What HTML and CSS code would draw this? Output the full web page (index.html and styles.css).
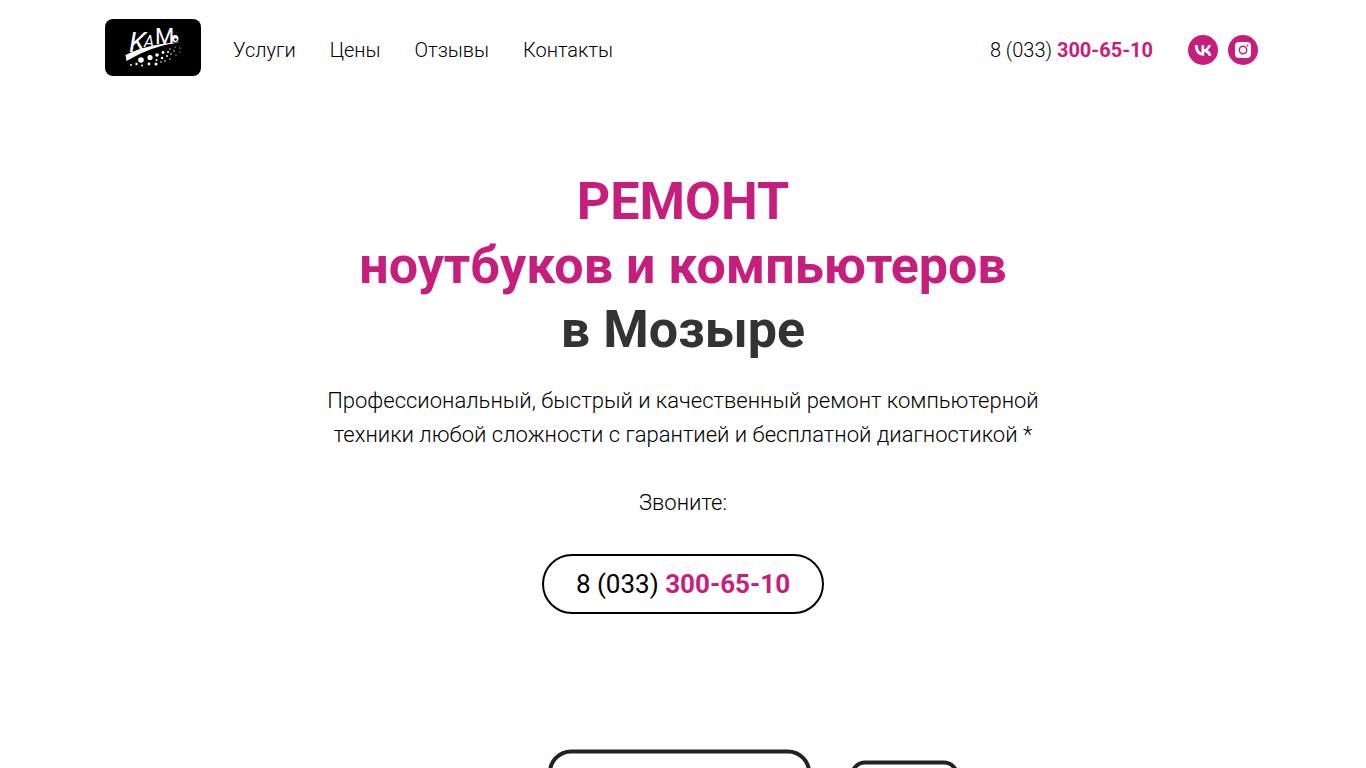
FILE: index.html
```
<!DOCTYPE html>
<html lang="ru">

<head>
    <meta charset="utf-8">
    <meta name="viewport" content="width=device-width, initial-scale=1">
    <title>Ремонт ноутбуков и компьютеров в Мозыре</title>
    <link rel="stylesheet" href="styles.css">
</head>

<body>
    <header class="header">
        <a href="#" class="logo" aria-label="КаМо">
            <svg width="96" height="57" viewBox="0 0 96 57">
                <rect width="96" height="57" rx="8"/>
                <g class="logo-text">
                    <text x="24" y="33" font-size="28" font-style="italic">K</text>
                    <text x="39" y="28" font-size="16" font-style="italic">A</text>
                    <text x="50" y="25" font-size="22">M</text>
                </g>
                <g fill="#fff">
                    <path d="M20.500 36Q42 25 76 23Q46 27 21.500 42Z"/>
                    <circle cx="70" cy="19.500" r="3.500"/>
                    <circle cx="36" cy="41" r="2.800"/>
                    <circle cx="45" cy="38.500" r="2.600"/>
                    <circle cx="52" cy="36" r="1.800"/>
                    <circle cx="58" cy="33.500" r="1.400"/>
                    <circle cx="63" cy="33" r="1"/>
                    <circle cx="26" cy="46" r="1"/>
                    <circle cx="31.500" cy="45" r="1.200"/>
                    <circle cx="37" cy="46.500" r="1"/>
                    <circle cx="44" cy="45" r="1.400"/>
                    <circle cx="51" cy="45" r="1.500"/>
                    <circle cx="51.500" cy="41" r="1"/>
                    <circle cx="57" cy="39" r="1.200"/>
                    <circle cx="56" cy="43" r=".8"/>
                    <circle cx="60" cy="42" r=".8"/>
                    <circle cx="62" cy="37" r=".9"/>
                    <circle cx="65" cy="40" r=".7"/>
                    <circle cx="66" cy="35" r=".8"/>
                    <circle cx="65" cy="30" r=".7"/>
                    <circle cx="69" cy="32" r=".7"/>
                    <circle cx="70" cy="28" r=".6"/>
                    <circle cx="71" cy="36" r=".6"/>
                    <circle cx="75" cy="29" r=".6"/>
                    <circle cx="75" cy="33" r=".5"/>
                </g>
                <circle cx="70.500" cy="20.500" r="1.300"/>
            </svg>
        </a>
        <nav class="nav">
            <a href="#services">Услуги</a>
            <a href="#prices">Цены</a>
            <a href="#reviews">Отзывы</a>
            <a href="#contacts">Контакты</a>
        </nav>
        <a href="tel:80333006510" class="phone">8 (033) <strong>300-65-10</strong></a>
        <div class="socials">
            <a href="#" aria-label="VK">
                <svg width="30" height="30" viewBox="0 0 30 30">
                    <circle cx="15" cy="15" r="15" fill="#c71e7e"/>
                    <path fill="#fff" d="M15.900 20.700C10.200 20.700 7 16.700 6.800 10.200H9.700C9.800 15 11.900 17 13.500 17.400V10.200H16.200V14.300C17.800 14.100 19.500 12.300 20.100 10.200H22.800C22.400 12.600 20.700 14.400 19.500 15.100C20.700 15.700 22.600 17.200 23.400 20.700H20.500C19.900 18.700 18.300 17.200 16.200 17V20.700Z"/>
                </svg>
            </a>
            <a href="#" aria-label="Instagram">
                <svg width="30" height="30" viewBox="0 0 30 30">
                    <circle cx="15" cy="15" r="15" fill="#c71e7e"/>
                    <rect x="7" y="7" width="16" height="16" rx="4" fill="#fff"/>
                    <circle cx="15" cy="15" r="3.700" fill="none" stroke="#c71e7e" stroke-width="1.500"/>
                    <circle cx="19.500" cy="10.500" r="1" fill="#c71e7e"/>
                </svg>
            </a>
        </div>
    </header>

    <main class="hero">
        <h1><span>РЕМОНТ<br>ноутбуков и компьютеров</span><br>в Мозыре</h1>
        <p class="descr">Профессиональный, быстрый и качественный ремонт компьютерной техники любой сложности с гарантией и бесплатной диагностикой *</p>
        <p class="call">Звоните:</p>
        <a href="tel:80333006510" class="btn">8 (033) <strong>300-65-10</strong></a>
        <!-- top edges of the monitor and the tablet -->
        <svg class="devices" width="560" height="19" viewBox="0 0 560 19">
            <rect x="147" y="2.500" width="259" height="180" rx="21"/>
            <rect x="449" y="13.500" width="105" height="160" rx="13"/>
        </svg>
    </main>
</body>

</html>
```
FILE: styles.css
```
body {
    margin: 0;
    background: #fff;
    color: #000;
    font-family: Roboto, Arial, sans-serif;
    font-weight: 300;
}

a {
    color: inherit;
    text-decoration: none;
}

strong {
    color: #c71e7e;
    font-weight: 700;
}

.header {
    display: flex;
    align-items: center;
    box-sizing: border-box;
    max-width: 1160px;
    margin: 0 auto;
    padding: 19px 5px 20px 2px;
    font-size: 20px;
    line-height: 30px;
}

.header svg {
    display: block;
}

.logo-text {
    fill: #fff;
    font-weight: 400;
}

.nav {
    display: flex;
    gap: 34px;
    margin-left: 32px;
    padding-top: 4px;
}

.phone {
    margin-left: auto;
    padding-top: 4px;
    white-space: nowrap;
}

.socials {
    display: flex;
    gap: 10px;
    margin-left: 35px;
    padding-top: 4px;
}

.hero {
    display: flex;
    flex-direction: column;
    align-items: center;
    padding-top: 74px;
    text-align: center;
}

h1 {
    margin: 0;
    color: #333;
    font-size: 52px;
    font-weight: 700;
    line-height: 64px;
}

h1 span {
    color: #c71e7e;
}

.descr,
.call {
    max-width: 720px;
    margin: 0;
    font-size: 22px;
    line-height: 34px;
}

.descr {
    margin-top: 22px;
}

.call {
    margin-top: 34px;
}

.btn {
    box-sizing: border-box;
    height: 60px;
    margin-top: 34px;
    padding: 0 32px;
    border: 2px solid #000;
    border-radius: 30px;
    font-size: 26px;
    font-weight: 400;
    line-height: 56px;
}

.devices {
    display: block;
    max-width: 100%;
    margin-top: 135px;
    fill: none;
    stroke: #222;
    stroke-width: 4;
}
```
